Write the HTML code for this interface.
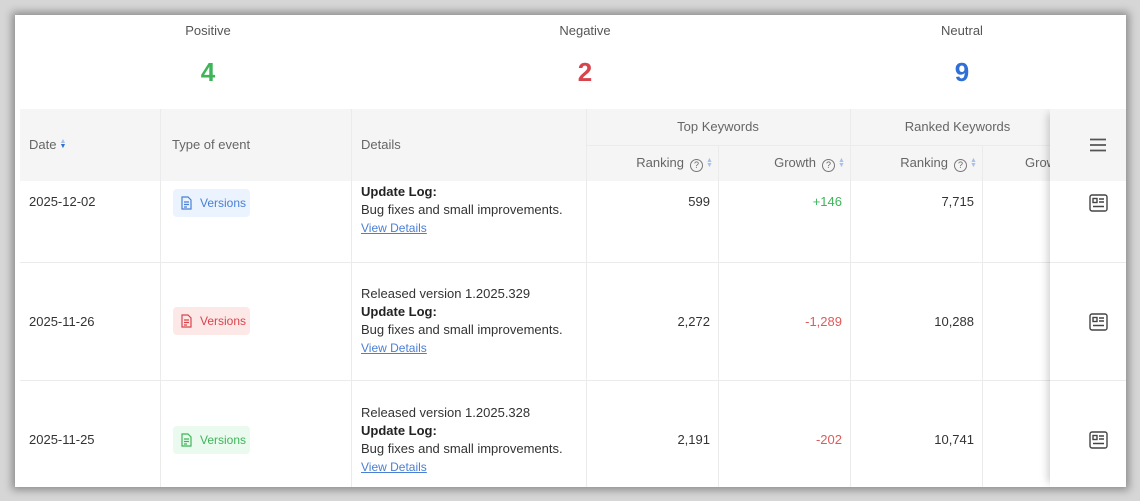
<!DOCTYPE html>
<html><head><style>
body{margin:0;width:1140px;height:501px;background:#d6d6d6;font-family:"Liberation Sans",sans-serif;overflow:hidden;position:relative}
.card{position:absolute;left:15px;top:15px;width:1111px;height:472px;background:#fff;box-shadow:0 0 8px 3px rgba(0,0,0,.35);overflow:hidden}
.a{position:absolute}
.lbl{font-size:13px;color:#555;text-align:center;width:200px}
.num{font-size:26px;font-weight:bold;text-align:center;width:200px}
.hd{background:#f5f5f5}
.ht{font-size:13px;color:#666}
.vl{position:absolute;width:1px;background:#ebebeb}
.hl{position:absolute;height:1px;background:#ebebeb}
.c{font-size:13px;color:#333}
.badge{position:absolute;height:28px;width:77px;border-radius:4px;font-size:12px;line-height:28px;box-sizing:border-box;padding-left:27px}
.badge svg{position:absolute;left:8px;top:7px}
.d{font-size:13px;color:#333;line-height:18px}
.d b{color:#222}
.d u{color:#4a7fd4;font-size:12px;text-decoration:underline}
.r{text-align:right;font-size:13px;color:#333;width:120px}
.q{display:inline-block;width:11px;height:11px;border:1px solid #777;border-radius:50%;font-size:9px;line-height:11px;text-align:center;color:#666;vertical-align:-1px;margin-left:6px}
.ar{display:inline-block;width:6px;vertical-align:0;margin-left:3px;font-size:7px;line-height:5px;color:#a9c1ea}
</style></head><body>
<div class="card">
<div class="a lbl" style="left:93px;top:8px">Positive</div>
<div class="a num" style="left:93px;top:42px;color:#3fb55a">4</div>
<div class="a lbl" style="left:470px;top:8px">Negative</div>
<div class="a num" style="left:470px;top:42px;color:#d9434b">2</div>
<div class="a lbl" style="left:847px;top:8px">Neutral</div>
<div class="a num" style="left:847px;top:42px;color:#2f6fd6">9</div>

<div class="a hd" style="left:5px;top:94px;width:1106px;height:72px"></div>
<div class="hl" style="left:571px;top:130px;width:480px"></div>
<div class="vl" style="left:145px;top:94px;height:378px"></div>
<div class="vl" style="left:336px;top:94px;height:378px"></div>
<div class="vl" style="left:571px;top:94px;height:378px"></div>
<div class="vl" style="left:703px;top:130px;height:342px"></div>
<div class="vl" style="left:835px;top:94px;height:378px"></div>
<div class="vl" style="left:967px;top:130px;height:342px"></div>
<div class="hl" style="left:5px;top:247px;width:1106px"></div>
<div class="hl" style="left:5px;top:365px;width:1106px"></div>

<div class="a ht" style="left:14px;top:122px">Date<span style="display:inline-block;margin-left:3px;font-size:7px;line-height:5px;vertical-align:1px;width:8px"><span style="color:#a9c1ea">▲</span><br><span style="color:#2f6fd6">▼</span></span></div>
<div class="a ht" style="left:157px;top:122px">Type of event</div>
<div class="a ht" style="left:346px;top:122px">Details</div>
<div class="a ht" style="left:571px;top:104px;width:264px;text-align:center">Top Keywords</div>
<div class="a ht" style="left:835px;top:104px;width:215px;text-align:center">Ranked Keywords</div>
<div class="a ht" style="left:571px;top:140px;width:126px;text-align:right">Ranking<span class="q">?</span><span class="ar">▲<br>▼</span></div>
<div class="a ht" style="left:703px;top:140px;width:126px;text-align:right">Growth<span class="q">?</span><span class="ar">▲<br>▼</span></div>
<div class="a ht" style="left:835px;top:140px;width:126px;text-align:right">Ranking<span class="q">?</span><span class="ar">▲<br>▼</span></div>
<div class="a ht" style="left:1010px;top:140px">Growth</div>

<!-- row1 -->
<div class="a c" style="left:14px;top:179px">2025-12-02</div>
<div class="badge" style="left:158px;top:174px;background:#eaf3fe;color:#4a7fd4"><svg width="11" height="14" viewBox="0 0 11 14" fill="none" stroke="#4a7fd4" stroke-width="1.2"><path d="M1 1h6l3 3v9H1z M3 6h5M3 8.5h5M3 11h3"/></svg>Versions</div>
<div class="a d" style="left:346px;top:168px"><b>Update Log:</b><br>Bug fixes and small improvements.<br><u>View Details</u></div>
<div class="a r" style="left:575px;top:179px">599</div>
<div class="a r" style="left:707px;top:179px;color:#3fb55a">+146</div>
<div class="a r" style="left:839px;top:179px">7,715</div>

<!-- row2 -->
<div class="a c" style="left:14px;top:299px">2025-11-26</div>
<div class="badge" style="left:158px;top:292px;background:#fde8e8;color:#d9434b"><svg width="11" height="14" viewBox="0 0 11 14" fill="none" stroke="#d9434b" stroke-width="1.2"><path d="M1 1h6l3 3v9H1z M3 6h5M3 8.5h5M3 11h3"/></svg>Versions</div>
<div class="a d" style="left:346px;top:270px">Released version 1.2025.329<br><b>Update Log:</b><br>Bug fixes and small improvements.<br><u>View Details</u></div>
<div class="a r" style="left:575px;top:299px">2,272</div>
<div class="a r" style="left:707px;top:299px;color:#e05a5a">-1,289</div>
<div class="a r" style="left:839px;top:299px">10,288</div>

<!-- row3 -->
<div class="a c" style="left:14px;top:417px">2025-11-25</div>
<div class="badge" style="left:158px;top:411px;background:#eafaee;color:#3fb55a"><svg width="11" height="14" viewBox="0 0 11 14" fill="none" stroke="#3fb55a" stroke-width="1.2"><path d="M1 1h6l3 3v9H1z M3 6h5M3 8.5h5M3 11h3"/></svg>Versions</div>
<div class="a d" style="left:346px;top:389px">Released version 1.2025.328<br><b>Update Log:</b><br>Bug fixes and small improvements.<br><u>View Details</u></div>
<div class="a r" style="left:575px;top:417px">2,191</div>
<div class="a r" style="left:707px;top:417px;color:#e05a5a">-202</div>
<div class="a r" style="left:839px;top:417px">10,741</div>

<!-- fixed column -->
<div class="a" style="left:1035px;top:94px;width:76px;height:378px;background:#fff;box-shadow:-6px 0 8px -4px rgba(0,0,0,.2);clip-path:inset(0 0 0 -20px)"></div>
<div class="a" style="left:1035px;top:94px;width:76px;height:72px;background:#f5f5f5"></div>
<div class="hl" style="left:1035px;top:247px;width:76px"></div>
<div class="hl" style="left:1035px;top:365px;width:76px"></div>
<svg class="a" style="left:1075px;top:123px" width="16" height="14"><path d="M0 1.5h16M0 7h16M0 12.5h16" stroke="#555" stroke-width="1.8"/></svg>
<svg class="a" style="left:1074px;top:179px" width="19" height="18" fill="none" stroke="#444" stroke-width="1.4"><rect x="1" y="1" width="17" height="16" rx="2"/><rect x="4" y="4.5" width="4" height="4"/><path d="M10 5h5M10 8h5M4 12.5h11"/></svg>
<svg class="a" style="left:1074px;top:298px" width="19" height="18" fill="none" stroke="#444" stroke-width="1.4"><rect x="1" y="1" width="17" height="16" rx="2"/><rect x="4" y="4.5" width="4" height="4"/><path d="M10 5h5M10 8h5M4 12.5h11"/></svg>
<svg class="a" style="left:1074px;top:416px" width="19" height="18" fill="none" stroke="#444" stroke-width="1.4"><rect x="1" y="1" width="17" height="16" rx="2"/><rect x="4" y="4.5" width="4" height="4"/><path d="M10 5h5M10 8h5M4 12.5h11"/></svg>
</div>
</body></html>
